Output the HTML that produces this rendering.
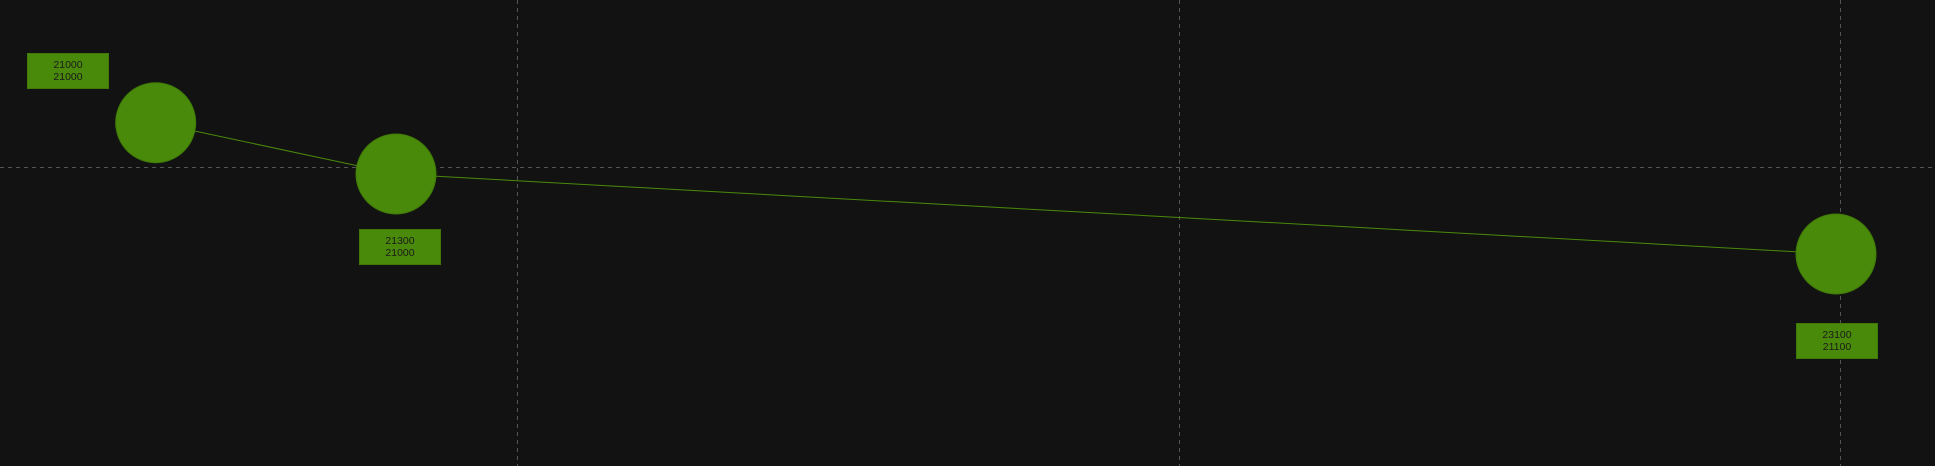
<!DOCTYPE html>
<html><head><meta charset="utf-8"><style>
html,body{margin:0;padding:0;background:#121212;width:1935px;height:466px;overflow:hidden}
svg{display:block}
text{font-family:"Liberation Sans",sans-serif;font-size:10.5px;fill:#1a1a1a}
</style></head><body>
<svg width="1935" height="466" viewBox="0 0 1935 466">
<rect width="1935" height="466" fill="#121212"/>
<g stroke="#555" stroke-width="1" stroke-dasharray="4,4" fill="none">
<line x1="0" y1="167.5" x2="1935" y2="167.5"/>
<line x1="517.5" y1="0" x2="517.5" y2="466"/>
<line x1="1179.5" y1="0" x2="1179.5" y2="466"/>
<line x1="1840.5" y1="0" x2="1840.5" y2="466"/>
</g>
<polyline points="155.7,122.7 396,174 1836,254" fill="none" stroke="#4a8a0a" stroke-width="1"/>
<g fill="#4a8a0a" stroke="#3f7a08" stroke-width="1">
<circle cx="155.7" cy="122.7" r="40"/>
<circle cx="396" cy="174" r="40"/>
<circle cx="1836" cy="254" r="40"/>
<rect x="27.5" y="53.5" width="81" height="35"/>
<rect x="359.5" y="229.5" width="81" height="35"/>
<rect x="1796.5" y="323.5" width="81" height="35"/>
</g>
<text x="68" y="68" text-anchor="middle">21000</text>
<text x="68" y="80" text-anchor="middle">21000</text>
<text x="400" y="244" text-anchor="middle">21300</text>
<text x="400" y="256" text-anchor="middle">21000</text>
<text x="1837" y="338" text-anchor="middle">23100</text>
<text x="1837" y="350" text-anchor="middle">21100</text>
</svg>
</body></html>
